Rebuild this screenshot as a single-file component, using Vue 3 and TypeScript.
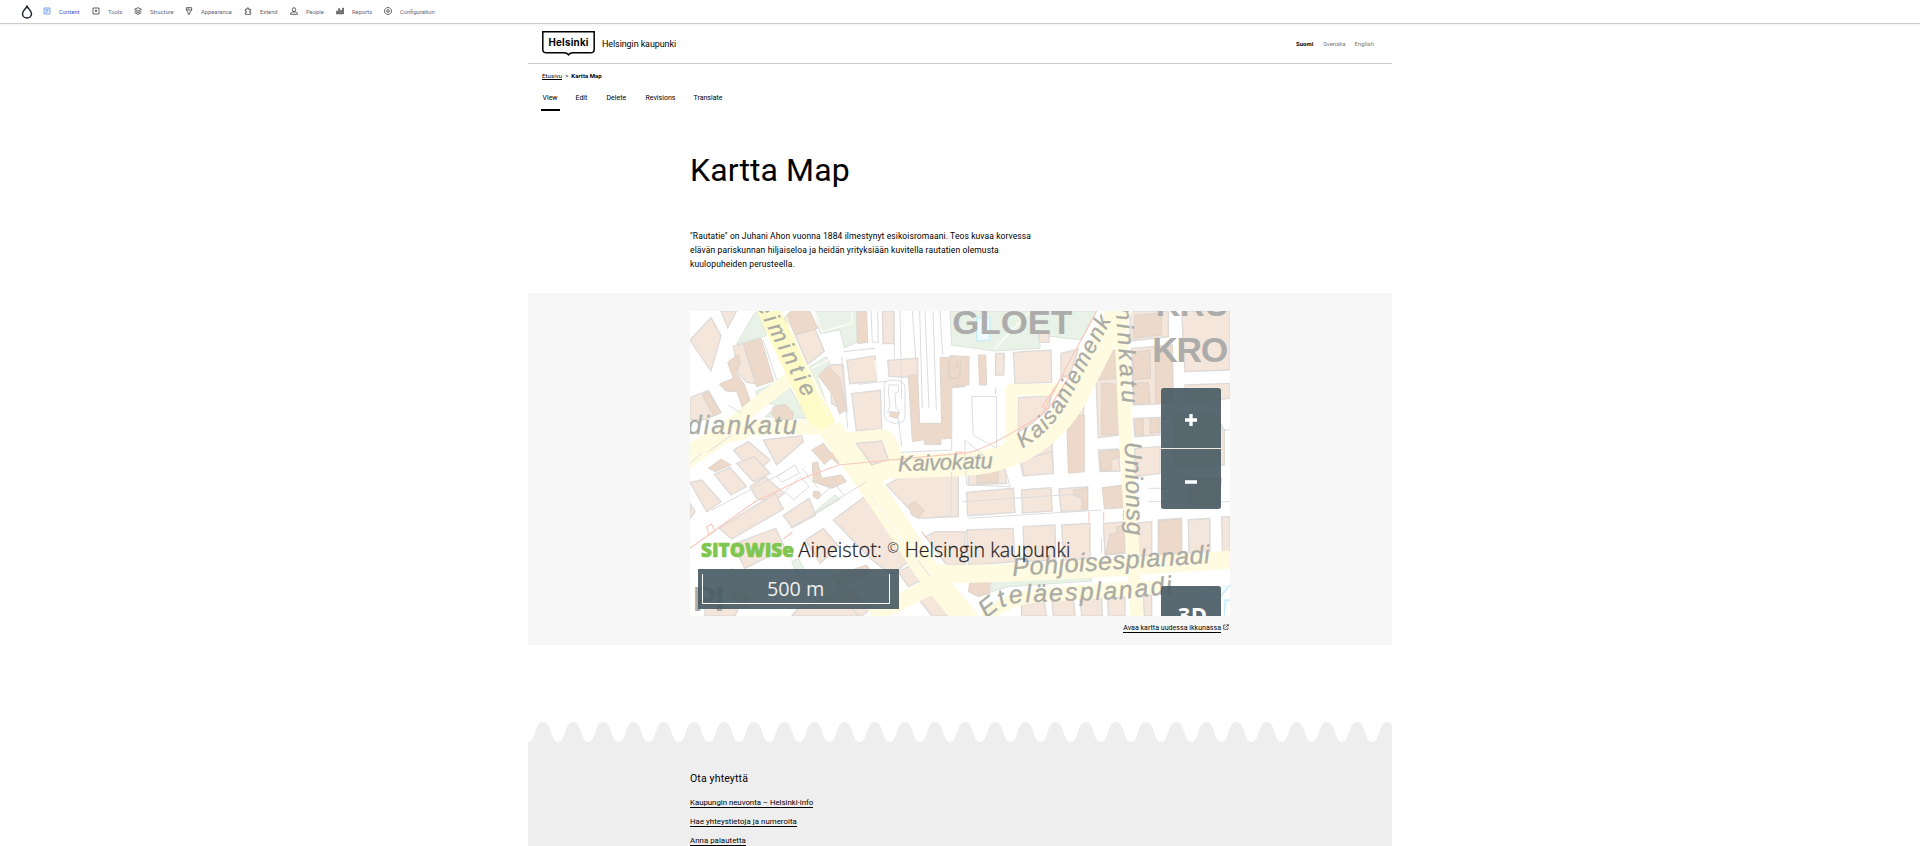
<script setup lang="ts">
interface MapLabel { text: string; x: number; y: number; size: number; width: number; rotate: number }

const toolbar = [
  { name: 'Content', icon: 'M3 3h18v18H3zM7 8h10M7 12h10M7 16h6' },
  { name: 'Tools', icon: 'M3 3h18v18H3zM12 8v6M9 11h6M10 13l4 0' },
  { name: 'Structure', icon: 'M12 2l10 5-10 5L2 7zM2 12l10 5 10-5M2 17l10 5 10-5' },
  { name: 'Appearance', icon: 'M4 2h16v7l-4 5-3 8h-3L8 14 4 9zM4 9h16M10 2v4' },
  { name: 'Extend', icon: 'M4 7h5V3h5v4h6v5h-3v4h3v6H4v-6h3v-4H4z' },
  { name: 'People', icon: 'M12 2a5 6 0 1 1 0 12 5 6 0 0 1 0-12M1 22v-3l7-4h8l7 4v3z' },
  { name: 'Reports', icon: 'M2 12h3v9H2zM8 5h3v16H8zM14 10h3v11h-3zM20 3h2v18h-2z' },
  { name: 'Configuration', icon: 'M8 2h8l6 6v8l-6 6H8l-6-6V8zM12 8a4 4 0 1 1 0 8 4 4 0 0 1 0-8' },
]
const tabs = ['View', 'Edit', 'Delete', 'Revisions', 'Translate']
const links = ['Kaupungin neuvonta – Helsinki-info', 'Hae yhteystietoja ja numeroita', 'Anna palautetta']

const green = [
  '155,118 205,30 217,18 245,92 175,110', '390,18 515,18 515,112 478,128 465,75 405,85', '365,190 425,155 435,175 395,212 425,298',
  '215,258 300,220 365,340 240,335 280,300 215,290', '795,18 1235,18 1190,105 1065,90 1065,130 930,138 800,120',
  '390,620 450,570 465,582 395,625', '320,770 340,760 370,815 340,820', '920,828 1220,812 1220,828 970,845 920,860',
]
const blocks = [
  '15,105 78,38 108,92 78,198', '108,18 155,18 128,68', '145,124 175,115 212,236 185,232 160,205 150,150', '330,88 390,72 418,138 368,178',
  '15,278 70,256 108,322 60,344 15,344', '435,180 474,178 486,320 440,296', '486,166 570,152 578,228 494,236', '592,18 626,18 626,116 594,116',
  '500,266 586,256 590,372 514,378', '608,166 698,160 698,218 612,214',
  '145,435 190,410 255,465 208,508', '235,405 350,392 355,410 275,480', '15,532 50,525 108,590 65,620', '15,595 30,620 15,640',
  '88,508 135,488 185,545 138,570', '155,475 208,455 255,505 205,530', '195,545 240,515 298,565 265,590 215,580',
  '102,670 270,565 295,612 140,702', '295,632 372,580 392,630 322,668', '142,718 272,670 300,730 180,790', '362,705 415,670 462,725 405,775',
  '445,645 552,565 690,755 620,810 555,760', '604,540 660,510 820,500 820,635 700,640', '722,695 750,680 840,680 840,780 785,780',
  '700,880 770,850 860,933 740,933', '480,860 560,910 530,933 440,933', '60,880 160,910 150,933 60,933', '340,910 460,860 520,933 320,933', '640,800 680,780 735,812 670,845',
  '932,145 958,145 956,210 932,210', '985,142 1098,135 1100,232 990,236', '1128,145 1180,132 1155,210 1128,220', '1060,85 1092,85 1092,112 1064,112',
  '1000,278 1100,272 1090,310 1035,360 998,382', '1150,335 1200,240 1195,330 1170,345', '1000,445 1100,390 1105,500 1015,512',
  '1230,145 1290,135 1302,390 1240,398', '1335,18 1450,18 1450,95 1335,108', '1340,130 1462,120 1464,295 1345,300',
  '1490,18 1635,18 1635,195 1500,200', '1500,240 1635,235 1635,280 1505,295', '1345,340 1425,337 1425,390 1350,395', '1470,330 1590,330 1618,375 1618,480 1470,480',
  '845,562 985,550 990,622 848,632', '1010,555 1098,548 1102,618 1012,624', '1122,552 1208,545 1208,615 1128,620',
  '845,675 984,670 990,770 850,780', '1014,665 1110,660 1112,765 1018,770', '1130,660 1215,655 1215,760 1135,765', '1255,655 1322,650 1325,745 1260,750',
  '1345,655 1400,650 1400,752 1350,755', '1420,645 1490,640 1490,750 1420,755', '1510,645 1575,640 1575,742 1512,745', '1610,635 1635,635 1635,740 1612,742',
  '1010,880 1075,875 1085,933 1010,933', '1100,880 1165,875 1170,933 1105,933', '1185,880 1250,875 1252,933 1190,933', '1268,880 1320,875 1320,933 1270,933', '1375,870 1400,870 1400,933 1378,933',
  '850,500 960,480 965,535 850,540', '1010,465 1100,440 1105,505 1015,512', '1240,435 1300,432 1305,498 1245,500', '1350,430 1425,425 1425,505 1345,515',
]
const buildings = [
  '175,115 228,100 266,228 215,245', '128,172 160,148 166,175 153,203 178,238 197,292 172,306 156,260 122,258 103,237 145,220',
  '297,38 318,18 375,18 398,70 332,90', '516,18 545,18 548,112 518,116', '400,213 430,183 465,220 483,315 463,327 447,275', '52,270 68,260 108,322 86,333',
  '670,210 698,210 704,355 770,355 765,158 840,156 840,245 800,248 800,400 768,402 768,418 718,418 718,404 682,410', '616,320 642,323 638,340 614,334',
  '260,325 265,305 300,298 325,322 322,345 272,345', '380,435 415,415 438,444 455,438 470,455 460,478 440,460 418,478', '382,475 398,470 410,520 470,510 484,530 440,550 385,530',
  '385,560 400,558 408,570 400,582 384,575', '795,152 852,155 852,240 795,242', '880,150 902,150 905,240 884,240', '1145,335 1198,330 1198,500 1150,505',
  '1240,142 1290,135 1296,220 1240,225', '1250,235 1298,238 1302,388 1250,390', '1345,142 1395,135 1397,220 1345,225', '1410,125 1462,120 1464,290 1412,295',
  '1345,235 1390,232 1396,292 1345,298', '1350,30 1430,25 1430,90 1345,100', '1350,345 1375,340 1375,390 1350,390', '1395,340 1425,337 1425,382 1395,385',
  '875,500 940,495 940,532 875,535', '1165,555 1208,548 1208,612 1190,612 1190,580 1165,570', '1252,548 1315,540 1318,608 1258,612', '1422,648 1488,642 1490,748 1420,752',
  '1275,688 1295,684 1295,665 1320,660 1320,742 1262,748', '855,830 915,825 915,865 880,875 850,860', '670,600 690,590 718,615 700,640 680,630',
  '440,815 545,780 560,800 465,850', '460,860 485,850 530,880 495,900', '70,490 108,462 138,480 92,500', '1245,440 1305,435 1308,455 1280,465 1280,495 1248,498', '1510,520 1610,520 1600,600 1510,600',
  '135,870 175,860 205,880 170,910',
]
const labels: MapLabel[] = [
  { text: 'eimintie', x: 213, y: 0, size: 68, width: 313, rotate: 63 },
  { text: 'diankatu', x: 8, y: 386, size: 75, width: 328, rotate: 0 },
  { text: 'Kaivokatu', x: 640, y: 499, size: 66, width: 284, rotate: -2 },
  { text: 'ninkatu', x: 1292, y: 8, size: 70, width: 288, rotate: 86 },
  { text: 'Unionsg', x: 1319, y: 411, size: 72, width: 280, rotate: 88.5 },
  { text: 'Pohjoisesplanadi', x: 983, y: 813, size: 76, width: 594, rotate: -3.8 },
]

const wavePeriod = 30.15
let wavePath = 'M0 20'
for (let i = 0; i < 29; i++) {
  const x = i * wavePeriod
  wavePath += `C${x + 8} 20 ${x + 6} 0 ${x + wavePeriod / 2} 0S${x + wavePeriod - 8} 20 ${x + wavePeriod} 20`
}
wavePath += 'V22H0Z'
</script>

<template>
  <div class="page">
    <nav class="toolbar">
      <svg class="drop" viewBox="0 0 12 14"><path d="M6 1.4C5 3.8 1.5 5.5 1.5 8.7a4.5 4.3 0 0 0 9 0C10.500 5.500 7 3.800 6 1.400Z" /></svg>
      <a v-for="item in toolbar" :key="item.name" :class="['tool', item.name.toLowerCase()]">
        <svg viewBox="0 0 24 24"><path :d="item.icon" /></svg><span>{{ item.name }}</span>
      </a>
    </nav>
    <div class="container">
      <header class="header">
        <svg class="logo" viewBox="0 0 53 26">
          <path d="M.8.800H52.200V18.500Q52.200 21.800 48.500 21.800H31Q28 21.800 26.500 23.800Q25 21.800 22 21.800H4.500Q.8 21.800 .8 18.500Z" />
          <text x="6.500" y="14.800" textLength="40">Helsinki</text>
        </svg>
        <span class="site">Helsingin kaupunki</span>
        <div class="langs"><b>Suomi</b><span>Svenska</span><span>English</span></div>
      </header>
      <div class="crumbs"><a>Etusivu</a><i>&gt;</i><b>Kartta Map</b></div>
      <div class="tabs"><a v-for="(t, i) in tabs" :key="t" :class="['tab' + i, { active: i === 0 }]">{{ t }}</a></div>
      <h1>Kartta Map</h1>
      <div class="lead">
        <p>"Rautatie" on Juhani Ahon vuonna 1884 ilmestynyt esikoisromaani. Teos kuvaa korvessa</p>
        <p class="l2">elävän pariskunnan hiljaiseloa ja heidän yrityksiään kuvitella rautatien olemusta</p>
        <p class="l2">kuulopuheiden perusteella.</p>
      </div>
      <section class="map-section">
        <svg class="map" viewBox="15 18 1620 915">
          <defs>
            <path id="kaisaniemi" d="M1012 430Q1102 378 1152 285L1287 30" />
            <path id="etela" d="M905 942Q950 896 1010 892L1310 882L1490 862" />
          </defs>
          <rect x="15" y="18" width="1620" height="915" fill="#fff" />
          <g class="green"><polygon v-for="p in green" :key="p" :points="p" /></g>
          <g class="block"><polygon v-for="p in blocks" :key="p" :points="p" /></g>
          <g class="building"><polygon v-for="p in buildings" :key="p" :points="p" /></g>
          <g class="road">
            <path d="M0 446L120 375L315 220" stroke-width="42" />
            <path d="M150 369L405 366Q450 375 485 405L575 395Q605 390 618 420L635 465" stroke-width="44" />
            <path d="M0 483L120 400L190 385" stroke-width="30" />
            <path d="M435 370L590 590L720 790L850 950" stroke-width="72" />
            <path d="M485 395L595 392L625 465L600 520L560 560Z" fill="#fffbe1" stroke-width="10" />
            <path d="M560 933L765 830" stroke-width="50" />
            <path d="M500 490L820 478Q970 475 1070 395Q1130 350 1170 280L1312 0" stroke-width="72" />
            <path d="M1180 254H980V430" stroke-width="36" />
            <path d="M1305 0L1322 400L1355 933" stroke-width="40" />
            <path d="M740 805Q900 815 1635 764" stroke-width="54" />
            <path d="M900 940Q960 875 1080 870L1430 845" stroke-width="42" />
          </g>
          <polygon class="block" points="514,415 590,408 610,464 560,480" />
          <polygon points="215,18 287,18 440,325 450,350 405,375 365,342" fill="#fffbc8" />
          <g class="detail">
            <path d="M645 18L650 280M682 18L692 160M704 18L712 310M720 18L732 310M744 18L754 315M765 18L773 150M628 18V160M558 18L562 112H580L578 18" />
            <path d="M475 140L570 130M470 155L488 370M520 238L610 228M235 105L275 225M130 300L170 325M15 475L50 445M70 440L140 390M640 340L650 425" />
            <path d="M598 250Q590 225 625 225Q660 225 660 250V335Q658 355 630 355Q598 350 598 330ZM612 240H640V260L630 265L633 310L645 322H608L615 300L610 260Z" />
            <path d="M300 560L345 515L372 545L325 585ZM275 515L330 480L343 505L290 532ZM350 490L400 550M405 575L450 535L475 570M720 640L800 630V500M648 442L800 435V245" />
            <path d="M80 615L300 500M315 670L545 530M555 570L735 815M840 465L845 540L975 545Q965 500 955 490M835 590L1210 565M850 640L1250 615M1400 690V770M860 275H935V430L865 390ZM840 405V460L895 450Z" />
            <path d="M1390 340H1590V375H1635M1390 550H1500M1390 590H1635M1250 700V745M100 815a13 13 0 1 0 1 0M130 805L140 790L155 815Z" />
          </g>
          <path class="stadium" d="M790 170V195Q790 220 810 220Q826 220 826 195V170M815 172V190" />
          <g class="rail">
            <path d="M15 730L210 590L365 515L460 480L850 443Q910 430 1070 330L1145 185L1235 18M1135 210L1150 220L1088 315L1072 305Z" />
            <path d="M65 665L80 658L90 678L72 690ZM295 702L322 682M710 680L725 700M932 250V267M1212 620V650M1256 620V650M1315 615V645M810 441H835" />
          </g>
          <g class="pale"><path d="M930 130L1035 20M362 180L425 300M300 30L430 335M570 165L580 230M548 565L700 765M380 190L440 160M390 20L410 80L500 55V20" /></g>
          <path class="water" d="M875 40L915 38V105L875 108ZM1635 885H1620L1618 933M1545 850Q1550 890 1600 885L1635 840" />
          <g class="street">
            <text v-for="l in labels" :key="l.text" :font-size="l.size" :textLength="l.width" :transform="`translate(${l.x} ${l.y}) rotate(${l.rotate})`">{{ l.text }}</text>
            <text font-size="67"><textPath href="#kaisaniemi" textLength="475">Kaisaniemenk</textPath></text>
            <text font-size="75"><textPath href="#etela" textLength="573">Eteläesplanadi</textPath></text>
          </g>
          <g class="district">
            <text x="802" y="86" font-size="102" textLength="360" lengthAdjust="spacingAndGlyphs">GLOET</text>
            <text x="1412" y="32" font-size="102" textLength="220">KRU</text>
            <text x="1402" y="172" font-size="106" textLength="228">KRO</text>
            <text x="23" y="919" font-size="106" textLength="95">PI</text>
          </g>
          <g class="controls">
            <path d="M1428 429V257Q1428 249 1436 249H1600Q1608 249 1608 257V429Z" /><path d="M1428 432H1608V604Q1608 612 1600 612H1436Q1428 612 1428 604Z" />
            <path d="M1428 933V851Q1428 843 1436 843H1600Q1608 843 1608 851V933Z" />
            <path d="M39 792H642V912H39Z" />
          </g>
          <path d="M1428 430.500H1608" stroke="#f3e9df" stroke-width="3" />
          <path d="M1500 345H1536M1518 327V363M1500 531H1536" stroke="#fff" stroke-width="10" />
          <text class="three" x="1478" y="954" textLength="88">3D</text>
          <path d="M52.500 807V895.500H613.500V807" stroke="#fff" stroke-width="3" fill="none" />
          <text class="scale" x="246" y="873" textLength="172" lengthAdjust="spacingAndGlyphs">500 m</text>
          <text class="sitowise" x="48" y="755" textLength="279" lengthAdjust="spacingAndGlyphs">SITOWISe</text>
          <text class="credit" x="340" y="757" textLength="250" lengthAdjust="spacingAndGlyphs">Aineistot:</text>
          <text class="copyright" x="607" y="744" textLength="35" lengthAdjust="spacingAndGlyphs">©</text>
          <text class="credit" x="659" y="757" textLength="497" lengthAdjust="spacingAndGlyphs">Helsingin kaupunki</text>
        </svg>
        <div class="open"><a>Avaa kartta uudessa ikkunassa</a><svg viewBox="0 0 6 6"><path d="M2.500 1H.7V5.300H5V3.500M3.500.7H5.300V2.500M5.300.7L2.500 3.500" /></svg></div>
      </section>
      <footer>
        <svg class="wave" viewBox="0 0 864 22"><path :d="wavePath" fill="#eee" /></svg>
        <div class="foot">
          <h2>Ota yhteyttä</h2>
          <a v-for="(l, i) in links" :key="l" :class="'link' + i">{{ l }}</a>
        </div>
      </footer>
    </div>
  </div>
</template>

<style>
html, body { margin: 0; overflow: hidden; background: #fff; }
</style>
<style scoped>
.page { height: 846px; overflow: hidden; font-family: Roboto, "Liberation Sans", sans-serif; color: #000; }
.toolbar { height: 23px; border-bottom: 1px solid #ccc; box-shadow: 0 1px 3px #0001; display: flex; align-items: center; padding-left: 21px; }
.drop { width: 12px; height: 14px; fill: none; stroke: #222330; stroke-width: 1.5; margin-right: 10px; }
.tool { display: flex; align-items: center; font-size: 5.8px; color: #666674; white-space: nowrap; }
.tool svg { width: 8px; height: 8px; fill: none; stroke: #444; stroke-width: 2.5; margin: -1px 8px 0 0; flex: none; }
.tool span { display: block; line-height: 9px; margin-top: 1px; }
.content { width: 49px; color: #3b55d4; }.content svg { stroke: #5b91e8; }
.tools { width: 42px; }.structure { width: 51px; }.appearance { width: 59px; }.extend { width: 46px; }.people { width: 46px; }.reports { width: 48px; }
.container { width: 864px; margin: 0 auto; }
.header { height: 40px; border-bottom: 1px solid #ccc; display: flex; box-sizing: border-box; padding: 0 18px 0 14px; }
.logo { width: 53px; height: 26px; margin-top: 7px; }
.logo path { fill: none; stroke: #000; stroke-width: 1.500; }
.logo text { font: 700 9.800px Inter, sans-serif; }
.site { font-size: 9px; line-height: 12px; margin: 14px 0 0 7px; letter-spacing: -.1px; }
.langs { display: flex; margin: 16px 0 0 auto; font-size: 6px; line-height: 8px; gap: 9px; color: #777; }
.langs b { color: #000; margin-right: 1px; }
.crumbs { display: flex; gap: 3px; padding: 8px 14px 0; font-size: 6px; line-height: 8px; }
.crumbs i { font-style: normal; }
.crumbs a { border-bottom: 1px solid #000; height: 7px; letter-spacing: .1px; }
.crumbs b { letter-spacing: .05px; }
.tabs { display: flex; margin: 11px 0 0 13px; height: 22px; font-size: 7px; line-height: 15px; }
.tabs a { padding: 0 1.500px; box-sizing: border-box; height: 20px; white-space: nowrap; }
.tab0 { width: 19px; margin-right: 14px; }.tab1 { width: 18px; margin-right: 13px; }.tab2 { width: 25px; margin-right: 14px; }.tab3 { width: 34px; margin-right: 14px; }
.tabs .active { border-bottom: 2px solid #000; }
h1 { font-size: 32px; line-height: 40px; font-weight: 400; margin: 37px 0 0 162px; letter-spacing: .1px; }
.lead { margin: 39px 0 0 162px; font-size: 8.500px; line-height: 14px; letter-spacing: .1px; }
.lead p { margin: 0; white-space: nowrap; }
.lead .l2 { letter-spacing: .13px; }
.map-section { background: #f7f7f7; height: 352px; margin-top: 22px; padding: 18px 162px 0; box-sizing: border-box; }
.map { display: block; width: 540px; height: 305px; font-family: "Liberation Sans", sans-serif; }
.green { fill: #e9f2e6; stroke: #dce4dc; stroke-width: 3; }
.block { fill: #f5e6dc; stroke: #dedad7; stroke-width: 4; }
.building { fill: #edd9ca; stroke: #ddd5ce; stroke-width: 3; }
.road { fill: none; stroke: #fffbe1; stroke-linejoin: round; }
.detail { fill: none; stroke: #ddd; stroke-width: 3; }
.stadium { fill: none; stroke: #ddcfc4; stroke-width: 4; }
.rail { fill: none; stroke: #f9c9bd; stroke-width: 3.500; }
.pale { fill: none; stroke: #fffdf4; stroke-width: 4; }
.water { fill: #effaff; stroke: #c8edf9; stroke-width: 4; }
.street { font-style: italic; fill: #aaaba5; stroke: #aaaba5; stroke-width: 1; }
.district { font-weight: bold; fill: #acacab; }
.controls { fill: #465962; fill-opacity: .9; }
.three { font: bold 66px "Open Sans", sans-serif; fill: #fff; }
.scale { font: 62px "Open Sans", sans-serif; fill: #eee; }
.sitowise { font: 800 59px "Open Sans", sans-serif; fill: #7fc64e; stroke: #7fc64e; stroke-width: 2; stroke-linejoin: round; }
.credit { font: 300 62px "Open Sans", sans-serif; fill: #222; stroke: #222; stroke-width: .8; }
.copyright { font: 300 46px "Open Sans", sans-serif; fill: #222; }
.open { display: flex; justify-content: flex-end; font-size: 7px; line-height: 9px; padding: 8px 1px 0 0; gap: 2px; letter-spacing: .04px; }
.open a { border-bottom: 1px solid #000; height: 8px; }
.open svg { width: 6px; height: 6px; fill: none; stroke: #222; stroke-width: .7; }
footer { margin-top: 77px; }
.wave { display: block; width: 864px; height: 22px; }
.foot { background: #eee; height: 110px; padding: 28px 162px 0; display: flex; flex-direction: column; align-items: flex-start; box-sizing: border-box; }
h2 { font-size: 10.500px; line-height: 14px; font-weight: 400; margin: 0 0 12px; letter-spacing: .15px; }
.foot a { font-size: 7.800px; line-height: 9px; height: 9px; border-bottom: 1px solid #000; margin-bottom: 9px; white-space: nowrap; }
.foot .link1, .foot .link2 { letter-spacing: .06px; }
</style>
